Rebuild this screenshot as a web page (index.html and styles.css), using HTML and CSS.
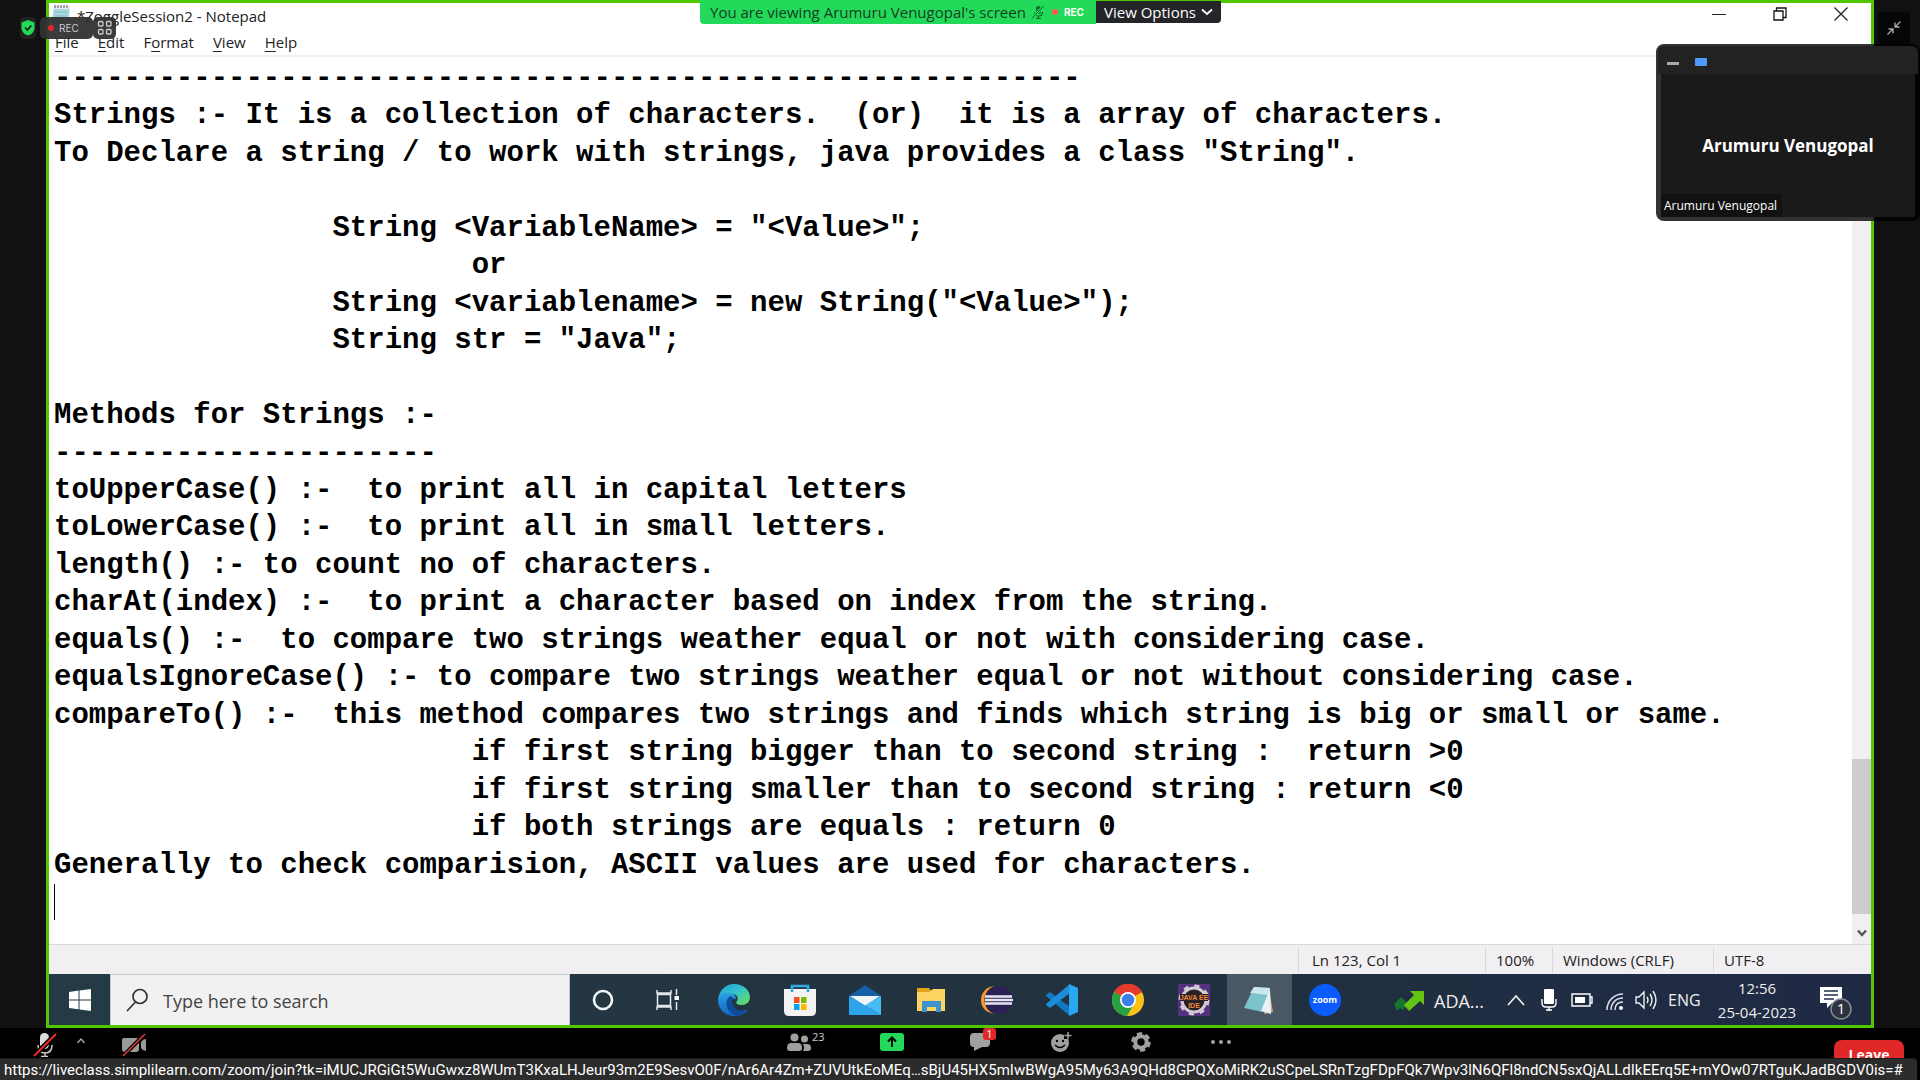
FILE: index.html
```html
<!DOCTYPE html>
<html lang="en">
<head>
<meta charset="utf-8">
<title>Live class</title>
<link rel="stylesheet" href="styles.css">
</head>
<body>
<main class="stage">
  <section class="share" aria-label="Shared screen">
    <header class="titlebar">
      <svg class="file-icon" width="20" height="24" viewBox="0 0 20 24"><path d="M3 2h16l-2 22H0z" fill="#a9d6e0"/><path d="M3 2h16v3H3z" fill="#e8eef0"/><path d="M4 1v3M7 1v3M10 1v3M13 1v3M16 1v3" stroke="#556" /><path d="M4 8h12M4 12h12M3 16h12" stroke="#7fb9c9"/></svg>
      <h1 class="title">*ZoggleSession2 - Notepad</h1>
      <div class="window-buttons">
        <button aria-label="Minimize"><svg width="14" height="14" viewBox="0 0 14 14"><path d="M0 7.500h14" stroke="#222"/></svg></button>
        <button aria-label="Restore"><svg width="14" height="14" viewBox="0 0 14 14" fill="none" stroke="#111" stroke-width="1.300"><path d="M1 4h9v9H1zM3.500 4V1H13v9.500h-3"/></svg></button>
        <button aria-label="Close"><svg width="14" height="14" viewBox="0 0 14 14"><path d="M.5.5l13 13M13.500.5l-13 13" stroke="#222" stroke-width="1.300"/></svg></button>
      </div>
    </header>
    <nav class="menubar">
      <button><u>F</u>ile</button><button><u>E</u>dit</button><button>F<u>o</u>rmat</button><button><u>V</u>iew</button><button><u>H</u>elp</button>
    </nav>
    <div class="editor">
      <textarea class="note" wrap="off" spellcheck="false" aria-label="Text editor">
-----------------------------------------------------------
Strings :- It is a collection of characters.  (or)  it is a array of characters.
To Declare a string / to work with strings, java provides a class "String".

                String &lt;VariableName&gt; = "&lt;Value&gt;";
                        or
                String &lt;variablename&gt; = new String("&lt;Value&gt;");
                String str = "Java";

Methods for Strings :-
----------------------
toUpperCase() :-  to print all in capital letters
toLowerCase() :-  to print all in small letters.
length() :- to count no of characters.
charAt(index) :-  to print a character based on index from the string.
equals() :-  to compare two strings weather equal or not with considering case.
equalsIgnoreCase() :- to compare two strings weather equal or not without considering case.
compareTo() :-  this method compares two strings and finds which string is big or small or same.
                        if first string bigger than to second string :  return &gt;0
                        if first string smaller than to second string : return &lt;0
                        if both strings are equals : return 0
Generally to check comparision, ASCII values are used for characters.
</textarea>
      <span class="caret"></span>
      <div class="scrollbar">
        <div class="thumb"></div>
        <button aria-label="Scroll down"><svg width="10" height="8" viewBox="0 0 10 8"><path d="M1 1.500l4 4.500 4-4.500" fill="none" stroke="#555" stroke-width="2.400"/></svg></button>
      </div>
    </div>
    <footer class="statusbar">
      <span class="status pos">Ln 123, Col 1</span><span class="status zoomlevel">100%</span><span class="status eol">Windows (CRLF)</span><span class="status enc">UTF-8</span>
    </footer>
    <div class="taskbar">
      <button class="start" aria-label="Start"><svg width="22" height="22" viewBox="0 0 22 22" fill="#fff"><path d="M0 3l9.500-1.400v8.900H0zM10.500 1.500L22 0v10.500H10.500zM0 11.500h9.500v8.800L0 19zM10.500 11.500H22V22l-11.500-1.500z"/></svg></button>
      <label class="search">
        <svg width="22" height="24" viewBox="0 0 22 24" fill="none" stroke="#333" stroke-width="1.700"><circle cx="14" cy="8.500" r="7"/><path d="M9.500 14L1 23"/></svg>
        <input type="text" placeholder="Type here to search" aria-label="Type here to search">
      </label>
      <div class="apps">
        <button aria-label="Cortana"><svg width="32" height="32" viewBox="0 0 32 32"><circle cx="16" cy="16" r="9" fill="none" stroke="#f2f5f7" stroke-width="2.600"/></svg></button>
        <button aria-label="Task view"><svg width="32" height="32" viewBox="0 0 32 32" fill="none" stroke="#e4e8ea" stroke-width="1.500"><path d="M5.500 10.500h13v11h-13zM5 6v3h14V6M5 26v-3h14v3M24.500 5v6M24.500 18v8"/><path d="M22.500 12h4.500v4h-4.500z" fill="#fff" stroke="none"/></svg></button>
        <button aria-label="Edge"><svg width="32" height="32" viewBox="0 0 32 32"><defs><linearGradient id="edge-top" x1="0" y1="0" x2="1" y2="1"><stop offset="0" stop-color="#249de0"/><stop offset=".5" stop-color="#35c5c9"/><stop offset="1" stop-color="#6be04b"/></linearGradient><linearGradient id="edge-low" x1="0" y1="0" x2="0" y2="1"><stop offset="0" stop-color="#2aa0e8"/><stop offset="1" stop-color="#1264c0"/></linearGradient></defs><path d="M0 16C1 6 8 0 16 0c10 0 16 7 16 13 0 5-4 8-8 8-5 0-7-2-5-4 2-3 0-7-5-7C7 10 1 14 0 16z" fill="url(#edge-top)"/><path d="M0 16c0-5 6-8 11-7 4 0 7 3 7 6-8-2-9 12 4 12 4 0 7-2 8-1-3 4-8 6-14 6C7 32 0 25 0 16z" fill="url(#edge-low)"/><path d="M12 12c-7 6-3 17 7 20 6-1 9-4 11-6-5 2-10 1-13-2-3-3-4-7-1-10z" fill="#0e4c9a"/></svg></button>
        <button aria-label="Store"><svg width="32" height="32" viewBox="0 0 32 32"><path d="M8 8V2h16v6" fill="none" stroke="#34a7df" stroke-width="2.500"/><path d="M0 5h32v22q0 5-5 5H5q-5 0-5-5z" fill="#f3f3f3"/><path d="M8 3v5M24 3v5" stroke="#34a7df" stroke-width="2.500"/><path fill="#f15022" d="M10 13h5.500v6H10z"/><path fill="#7fba00" d="M17 13h5.500v6H17z"/><path fill="#05a4ee" d="M10 20h5.500v6H10z"/><path fill="#feb800" d="M17 20h5.500v6H17z"/></svg></button>
        <button aria-label="Mail"><svg width="32" height="32" viewBox="0 0 32 32"><path d="M0 12L16 1l16 11v8H0z" fill="#135fa8"/><path d="M1 12h30L16 22z" fill="#eef3f8"/><path d="M0 12l32 19H0z" fill="#2ea5ea"/><path d="M32 12v19L16 21.500z" fill="#45bdf4"/></svg></button>
        <button aria-label="File Explorer"><svg width="32" height="32" viewBox="0 0 32 32"><path d="M2 4h12l3 4H2z" fill="#e0a317"/><path d="M2 8h12l4-3h12v22H2z" fill="#fcd462"/><path d="M7 28V17h19v11h-5v-5h-9v5z" fill="#3f91d0"/></svg></button>
        <button aria-label="Eclipse"><svg width="32" height="32" viewBox="0 0 32 32"><path d="M13 2a15 15 0 0 0 0 28C3 28 0 22 0 16S4 3 13 2z" fill="#f6992a"/><circle cx="18" cy="16" r="14" fill="#2c2156"/><path d="M4 12.500h27M4 16h28M4 19.500h27" stroke="#e8e4f2" stroke-width="2.400"/></svg></button>
        <button aria-label="Visual Studio Code"><svg width="32" height="32" viewBox="0 0 32 32"><path d="M0 11l4-3 20 15v9L0 12z" fill="#1179c4"/><path d="M0 21l4 3L24 9V0L0 20z" fill="#1e8edb"/><path d="M23 0l9 4v24l-9 4z" fill="#29a8f2"/></svg></button>
        <button aria-label="Chrome"><svg width="32" height="32" viewBox="0 0 32 32"><circle cx="16" cy="16" r="16" fill="#fbc116"/><path d="M16 16L2 8a16 16 0 0 1 28 0z" fill="#e33b2e"/><path d="M2.100 8A16 16 0 0 0 15 32l7-12-6-4z" fill="#27a243"/><circle cx="16" cy="16" r="8" fill="#fff"/><circle cx="16" cy="16" r="6.300" fill="#3f7fe8"/></svg></button>
        <button aria-label="Java EE IDE"><svg width="32" height="32" viewBox="0 0 32 32"><path d="M0 0h32v32H0z" fill="#56327e"/><circle cx="16" cy="16" r="12" fill="#2b2024" stroke="#cfcbd6" stroke-width="3"/><circle cx="16" cy="16" r="14" fill="none" stroke="#cfcbd6" stroke-width="3" stroke-dasharray="5 6"/><path d="M2 10h28v7H2z" fill="#2b2024"/><text x="16" y="16" class="ee">JAVA EE</text><text x="16" y="24" class="ee">IDE</text></svg></button>
        <button class="active" aria-label="Notepad"><svg width="32" height="32" viewBox="0 0 32 32"><path d="M26 4l4 24-9 2z" fill="#c9a77c"/><path d="M11 3l16 1-7 24-19-4z" fill="#7cc3cc"/><path d="M11 3l16 1-2 7-18-2z" fill="#c9e8ea"/><path d="M27 5l1 25-10-3z" fill="#e9f3f4"/></svg></button>
        <button aria-label="Zoom"><svg width="32" height="32" viewBox="0 0 32 32"><circle cx="16" cy="16" r="16" fill="#0b5cff"/><text x="16" y="19" class="zm">zoom</text></svg></button>
      </div>
      <div class="tray">
        <button class="stock"><svg width="32" height="22" viewBox="0 0 32 22"><path d="M1 14l7-7 7 7-5 6-3-2-3 3z" fill="#17752c"/><path d="M11 15L21 5l-4-4h14v14l-4-4-11 10z" fill="#63c414"/></svg>ADA...</button>
        <button class="t-up" aria-label="Show hidden icons"><svg width="18" height="12" viewBox="0 0 18 12"><path d="M1 11l8-9 8 9" fill="none" stroke="#eee" stroke-width="1.700"/></svg></button>
        <button class="t-mic" aria-label="Microphone"><svg width="16" height="22" viewBox="0 0 16 22"><rect x="3" width="10" height="15" rx="1" fill="#fff"/><path d="M1 10v4q0 4 4 4h6q4 0 4-4v-4M8 18v4M5 21h6" fill="none" stroke="#fff" stroke-width="1.400"/></svg></button>
        <button class="t-bat" aria-label="Battery"><svg width="22" height="14" viewBox="0 0 22 14"><path d="M1 1h18v12H1zM19 4h2v6h-2" fill="none" stroke="#fff" stroke-width="1.400"/><path d="M4 4h10v6H4z" fill="#fff"/></svg></button>
        <button class="t-wifi" aria-label="Network"><svg width="18" height="18" viewBox="0 0 18 18" fill="none" stroke="#dde" stroke-width="1.500"><path d="M1 17C1 8 8 1 17 1M5 17C5 10 10 5 17 5M9 17c0-5 3-8 8-8"/><circle cx="15" cy="15" r="2" fill="#fff" stroke="none"/></svg></button>
        <button class="t-vol" aria-label="Volume"><svg width="22" height="20" viewBox="0 0 22 20" fill="none" stroke="#eee" stroke-width="1.400"><path d="M1 7h3l5-5v16l-5-5H1zM12 7q2 3 0 6M15 4q4 6 0 12M18 1q6 9 0 18"/></svg></button>
        <span class="lang">ENG</span>
        <time class="clock"><span>12:56</span><span>25-04-2023</span></time>
        <button class="t-note" aria-label="1 new notification"><svg width="32" height="34" viewBox="0 0 32 34"><path d="M0 1h22v16H12l-5 5v-5H0z" fill="#fff"/><path d="M4 5h14M4 9h14M4 13h10" stroke="#23304a" stroke-width="1.500"/><circle cx="21" cy="23" r="10" fill="#2e3340" stroke="#858a93" stroke-width="1.500"/><text x="21" y="28" class="cnt">1</text></svg></button>
      </div>
    </div>
  </section>

  <div class="badges">
    <span class="shield"><svg width="14" height="16" viewBox="0 0 14 16"><path d="M7 0l6.500 2.500V7c0 5-3 7.500-6.500 8.500C3.500 14.500.5 12 .5 7V2.500z" fill="#23d959"/><path d="M4 7.500l2.300 2.500L10.300 5.500" fill="none" stroke="#111" stroke-width="1.600"/></svg></span>
    <span class="rec"><i class="dot"></i>REC</span>
    <span class="grid-icon"><svg width="16" height="16" viewBox="0 0 16 16" fill="none" stroke="#ccc" stroke-width="1.300"><rect x="1.500" y="1.500" width="4.500" height="4.500" rx="1"/><rect x="9.500" y="1.500" width="4.500" height="4.500" rx="1"/><rect x="1.500" y="9.500" width="4.500" height="4.500" rx="1"/><rect x="9.500" y="9.500" width="4.500" height="4.500" rx="1"/></svg></span>
  </div>

  <div class="banner">
    <div class="viewing">
      <span>You are viewing Arumuru Venugopal's screen</span>
      <svg width="14" height="14" viewBox="0 0 14 14"><rect x="5" y="1" width="5" height="8" rx="2.500" fill="#0c6b2d"/><path d="M3.500 7q0 4 4 4t4-4M7.500 11v2.500M5 13.500h5" fill="none" stroke="#0c6b2d" stroke-width="1.200"/><path d="M1 13L13.500.5" stroke="#23d959" stroke-width="3"/><path d="M1 13L13 1" stroke="#0c6b2d"/></svg>
      <span class="live"><i class="dot"></i>REC</span>
    </div>
    <button class="options">View Options<svg width="12" height="8" viewBox="0 0 12 8"><path d="M1 1.500l5 4.500 5-4.500" fill="none" stroke="#fff" stroke-width="1.800"/></svg></button>
  </div>

  <button class="exit-full" aria-label="Exit full screen"><svg width="14" height="14" viewBox="0 0 14 14" fill="none" stroke="#aaa" stroke-width="1.300"><path d="M13.500.5L8.500 5.500M8 1.500v4.500h4.500M.5 13.500l5-5M1.500 8H6v4.500"/></svg></button>

  <aside class="speaker">
    <div class="speaker-head"><i class="min"></i><i class="view"></i></div>
    <div class="speaker-body">
      <strong>Arumuru Venugopal</strong>
      <span class="speaker-label">Arumuru Venugopal</span>
    </div>
  </aside>
</main>

<footer class="controls">
  <div class="left">
    <button aria-label="Unmute"><svg width="24" height="24" viewBox="0 0 24 24"><rect x="7" width="9" height="16" rx="4.500" fill="#ddd"/><path d="M5 12q0 8 7 8t7-8M12 20v4M8 23.500h7" fill="none" stroke="#ccc" stroke-width="1.500"/><path d="M1 23L23 1" stroke="#000" stroke-width="5"/><path d="M1 23L23 1" stroke="#ef2b2b" stroke-width="2"/></svg></button>
    <button class="more" aria-label="Audio options"><svg width="8" height="6" viewBox="0 0 8 6"><path d="M.5 5L4 1l3.500 4" fill="none" stroke="#aaa" stroke-width="1.300"/></svg></button>
    <button aria-label="Start video"><svg width="24" height="24" viewBox="0 0 24 24"><path d="M2 5h12q3 0 3 3v8q0 3-3 3H3q-3 0-3-3V7q0-2 2-2zM19 9q2-3 5-3v12q-3 0-5-3z" fill="#999"/><path d="M1 23L23 1" stroke="#000" stroke-width="4"/><path d="M1 23L23 1" stroke="#ef3b3b" stroke-width="1.500"/></svg></button>
  </div>
  <div class="center">
    <button class="participants" aria-label="Participants"><svg width="24" height="18" viewBox="0 0 24 18" fill="#a0a0a0"><circle cx="7.500" cy="4.500" r="4"/><path d="M0 15q0-5 4-5h7q4 0 4 5 0 3-3 3H3q-3 0-3-3z"/><circle cx="17.500" cy="6" r="3.500"/><path d="M16 11h4q4 0 4 4 0 3-3 3h-5q2-3 0-7z"/></svg><span class="people">23</span></button>
    <button class="share-screen" aria-label="Share screen"><svg width="24" height="18" viewBox="0 0 24 18"><rect width="24" height="18" rx="3" fill="#23d959"/><path d="M12 14V5M8 8.500l4-4 4 4" fill="none" stroke="#000" stroke-width="2"/></svg></button>
    <button aria-label="Chat"><svg width="24" height="18" viewBox="0 0 24 18"><path d="M5 0h12q4 0 4 4v6q0 4-4 4h-4l-8 4v-4q-4 0-4-4V4q0-4 4-4z" fill="#a0a0a0"/></svg><span class="unread">1</span></button>
    <button aria-label="Reactions"><svg width="24" height="22" viewBox="0 0 24 22"><circle cx="11" cy="12" r="9" fill="#a0a0a0"/><path d="M15 0h9v8H15z" fill="#000"/><path d="M19 1v7M15.500 4.500h7" stroke="#a0a0a0" stroke-width="1.500"/><circle cx="8" cy="10" r="1.200"/><circle cx="14" cy="10" r="1.200"/><path d="M6 14q5 5 10 0" fill="none" stroke="#000" stroke-width="1.600"/></svg></button>
    <button aria-label="Settings"><svg width="24" height="20" viewBox="0 0 24 20"><circle cx="12" cy="10" r="5.700" fill="none" stroke="#a0a0a0" stroke-width="4"/><circle cx="12" cy="10" r="8.300" fill="none" stroke="#a0a0a0" stroke-width="3" stroke-dasharray="5.200 3.490"/></svg></button>
    <button aria-label="More"><svg width="24" height="6" viewBox="0 0 24 6" fill="#a0a0a0"><circle cx="4" cy="3" r="2"/><circle cx="12" cy="3" r="2"/><circle cx="20" cy="3" r="2"/></svg></button>
  </div>
  <button class="leave">Leave</button>
</footer>
<a class="link-hint" href="#">https://liveclass.simplilearn.com/zoom/join?tk=iMUCJRGiGt5WuGwxz8WUmT3KxaLHJeur93m2E9SesvO0F/nAr6Ar4Zm+ZUVUtkEoMEq…sBjU45HX5mIwBWgA95My63A9QHd8GPQXoMiRK2uSCpeLSRnTzgFDpFQk7Wpv3lN6QFl8ndCN5sxQjALLdIkEErq5E+mYOw07RTguKJadBGDV0is=#</a>
</body>
</html>
```

FILE: styles.css
```css
* { box-sizing: border-box; }
body {
  margin: 0;
  height: 100vh;
  display: flex;
  flex-direction: column;
  position: relative;
  overflow: hidden;
  background: #000;
  font-family: "Open Sans", "Noto Sans", sans-serif;
}
button {
  border: 0;
  padding: 0;
  background: none;
  font: inherit;
  color: inherit;
  display: flex;
  align-items: center;
  justify-content: center;
}
svg { display: block; flex: none; }

.stage {
  flex: 1;
  min-height: 0;
  display: flex;
  position: relative;
  padding: 0 46px;
  background: #111;
}
.share {
  flex: 1;
  min-width: 0;
  display: flex;
  flex-direction: column;
  border: 3px solid #4fc800;
  background: #fff;
  color: #222;
}

/* Notepad */
.titlebar {
  height: 26px;
  display: flex;
  align-items: center;
  padding-left: 2px;
}
.title {
  margin: 0 auto 0 6px;
  font-size: 15px;
  font-weight: 400;
}
.window-buttons { display: flex; align-self: flex-start; }
.window-buttons button { width: 61px; height: 22px; }
.menubar {
  height: 28px;
  display: flex;
  align-items: center;
  gap: 19px;
  padding-left: 6px;
  border-bottom: 2px solid #f0f0f0;
  font-size: 15px;
}
.menubar u { text-underline-offset: 3px; }
.editor {
  flex: 1;
  min-height: 0;
  display: flex;
  position: relative;
}
.note {
  flex: 1;
  min-width: 0;
  border: 0;
  outline: 0;
  margin: 0;
  padding: 3px 0 0 5px;
  resize: none;
  overflow: hidden;
  background: #fff;
  color: #000;
  font: bold 29px/1.292 "Liberation Mono", monospace;
}
.caret {
  position: absolute;
  left: 5px;
  bottom: 24px;
  width: 1px;
  height: 36px;
  background: #000;
}
.scrollbar {
  width: 19px;
  display: flex;
  flex-direction: column;
  justify-content: flex-end;
  background: #f0eff1;
}
.thumb { height: 155px; background: #cdcccf; }
.scrollbar button { height: 30px; padding-top: 8px; }
.statusbar {
  height: 30px;
  display: flex;
  justify-content: flex-end;
  align-items: center;
  border-top: 1px solid #d8d7d9;
  background: #f1eff2;
  font-size: 15px;
}
.status {
  height: 26px;
  display: flex;
  align-items: center;
  padding-left: 10px;
  border-left: 1px solid #dcdadd;
}
.pos { width: 187px; padding-left: 13px; }
.zoomlevel { width: 67px; }
.eol { width: 161px; }
.enc { width: 158px; }

/* Windows taskbar */
.taskbar {
  height: 51px;
  display: flex;
  background: linear-gradient(90deg, #243a45, #22333f 50%, #1f2944);
  color: #eee;
}
.start { width: 61px; }
.search {
  width: 460px;
  display: flex;
  align-items: center;
  gap: 15px;
  padding-left: 15px;
  border: 1px solid #c9c9c9;
  border-bottom: 0;
  background: #f2f1f2;
}
.search input {
  flex: 1;
  min-width: 0;
  border: 0;
  padding: 2px 0 0;
  outline: 0;
  background: none;
  font: 18px "Open Sans", "Noto Sans", sans-serif;
}
.search input::placeholder { color: #444; opacity: 1; }
.apps {
  flex: 1;
  display: grid;
  grid-template-columns: repeat(12, 1fr);
}
.apps .active { background: #4a5866; }
.ee { font: bold 7px "Liberation Sans", sans-serif; fill: #f08a3c; text-anchor: middle; }
.zm { font: bold 9px "Open Sans", sans-serif; fill: #fff; text-anchor: middle; }
.cnt { font: 15px "Open Sans", sans-serif; fill: #fff; text-anchor: middle; }
.tray {
  width: 513px;
  display: flex;
  align-items: center;
  padding-left: 35px;
}
.stock { gap: 9px; font-size: 18px; width: 102px; justify-content: flex-start; padding-top: 3px; }
.t-up { width: 42px; }
.t-mic { width: 24px; }
.t-bat { width: 42px; }
.t-wifi { width: 24px; padding-top: 4px; }
.t-vol { width: 38px; }
.lang { width: 43px; padding-left: 3px; font-size: 16px; }
.clock {
  width: 98px;
  display: flex;
  flex-direction: column;
  align-items: center;
  font-size: 15px;
  line-height: 24px;
}
.t-note { margin-left: 14px; padding-top: 6px; }

/* Overlays on the shared screen */
.badges {
  position: absolute;
  left: 20px;
  top: 17px;
  height: 22px;
  display: flex;
}
.badges span {
  display: flex;
  align-items: center;
  justify-content: center;
  border-radius: 5px;
  background: rgba(50, 50, 50, .95);
}
.badges .shield { width: 16px; margin-right: 4px; background: #222; }
.badges .rec { width: 53px; gap: 5px; padding-right: 6px; color: #ccc; font: 10px Inter, sans-serif; }
.badges .grid-icon { width: 23px; }
.dot { width: 6px; height: 6px; border-radius: 50%; background: #e02828; }
.banner {
  position: absolute;
  top: 0;
  left: 700px;
  right: 699px;
  height: 24px;
  display: flex;
  font-size: 15px;
}
.viewing {
  flex: 1;
  display: flex;
  align-items: center;
  padding: 0 12px 0 10px;
  gap: 5px;
  white-space: nowrap;
  border-radius: 0 0 0 4px;
  background: #23d959;
  color: #173d25;
}
.live {
  display: flex;
  align-items: center;
  gap: 6px;
  margin-left: auto;
  color: #fff;
  font: bold 10px Inter, sans-serif;
}
.live .dot { background: #ff5a50; }
.options {
  width: 125px;
  height: 22px;
  margin-top: 1px;
  gap: 5px;
  border-radius: 0 0 4px 0;
  background: #242528;
  color: #fff;
}
.exit-full {
  position: absolute;
  right: 10px;
  top: 12px;
  width: 32px;
  height: 32px;
  border-radius: 4px;
  background: #050707;
}
.speaker {
  position: absolute;
  right: 0;
  top: 44px;
  width: 264px;
  height: 177px;
  display: flex;
  flex-direction: column;
  padding: 2px 2px 4px;
  border-radius: 8px;
  background: linear-gradient(90deg, #333 82%, #020202 83%);
}
.speaker-head {
  height: 28px;
  display: flex;
  align-items: center;
  gap: 16px;
  padding: 4px 9px 0;
  border-radius: 6px 6px 0 0;
  background: #222;
}
.min { width: 12px; height: 3px; margin-top: 2px; background: #aaa; }
.view { width: 12px; height: 8px; border-radius: 1px; background: #4f9bf8; }
.speaker-body {
  flex: 1;
  display: flex;
  align-items: center;
  justify-content: center;
  position: relative;
  margin: 0 3px;
  background: #1a1a1a;
  color: #fff;
}
.speaker-body strong { font-size: 17px; font-weight: 700; }
.speaker-label {
  position: absolute;
  left: 0;
  bottom: 0;
  height: 23px;
  padding: 0 5px 0 3px;
  background: #111;
  font-size: 12px;
  line-height: 23px;
}

/* Meeting controls */
.controls {
  height: 52px;
  display: flex;
  justify-content: space-between;
  align-items: flex-start;
  position: relative;
  background: #000;
}
.left {
  display: flex;
  align-items: center;
  gap: 18px;
  padding: 5px 0 0 33px;
}
.left .more { width: 11px; height: 16px; align-self: flex-start; }
.left .more + button { margin-left: 18px; }
.center {
  position: absolute;
  left: 100px;
  right: 0;
  top: 2px;
  display: flex;
  justify-content: center;
  gap: 56px;
  height: 24px;
}
.center button { position: relative; width: 24px; }
.center .participants { margin-right: 13px; }
.center .share-screen { margin-right: 9px; }
.people {
  position: absolute;
  left: 25px;
  top: 0;
  color: #ccc;
  font-size: 11px;
  line-height: 14px;
}
.unread {
  position: absolute;
  left: 14px;
  top: -2px;
  width: 13px;
  height: 12px;
  border-radius: 3px;
  background: #e02828;
  color: #fff;
  font-size: 11px;
  line-height: 12px;
}
.leave {
  width: 70px;
  height: 28px;
  margin: 12px 16px 0 0;
  border-radius: 8px;
  background: #e02828;
  color: #fff;
  font-size: 14px;
  font-weight: 700;
}
.link-hint {
  position: absolute;
  left: 0;
  bottom: 0;
  height: 22px;
  padding: 0 14px 0 4px;
  border-top: 1px solid #1c1c1c;
  border-radius: 0 4px 0 0;
  background: #2c2c2c;
  color: #fff;
  font-family: Roboto, "Noto Sans", sans-serif;
  font-size: 15px;
  line-height: 22px;
  white-space: nowrap;
  text-decoration: none;
}
```
